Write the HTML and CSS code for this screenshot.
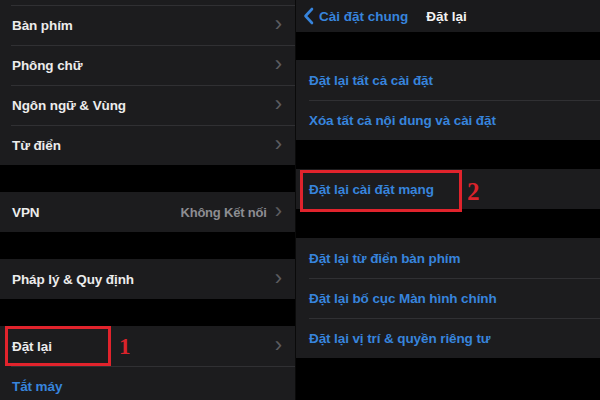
FILE: index.html
```html
<!DOCTYPE html>
<html lang="vi">
<head>
    <meta charset="UTF-8">
    <title>Cài đặt chung - Đặt lại</title>
    <link rel="stylesheet" href="styles.css">
</head>
<body>
    <div class="screens">
        <div class="panel left">
            <div class="group top">
                <div class="row stub"></div>
                <div class="row"><span class="label">Bàn phím</span><span class="chev">›</span></div>
                <div class="row"><span class="label">Phông chữ</span><span class="chev">›</span></div>
                <div class="row"><span class="label">Ngôn ngữ &amp; Vùng</span><span class="chev">›</span></div>
                <div class="row"><span class="label">Từ điển</span><span class="chev">›</span></div>
            </div>
            <div class="group">
                <div class="row"><span class="label">VPN</span><span class="value">Không Kết nối</span><span class="chev">›</span></div>
            </div>
            <div class="group">
                <div class="row"><span class="label">Pháp lý &amp; Quy định</span><span class="chev">›</span></div>
            </div>
            <div class="group">
                <div class="row marked">
                    <span class="label">Đặt lại</span><span class="chev">›</span>
                    <div class="mark mark-1"></div>
                    <div class="step step-1">1</div>
                </div>
                <div class="row"><span class="label link">Tắt máy</span></div>
            </div>
        </div>

        <div class="panel right">
            <div class="navbar">
                <svg class="back" width="11" height="18" viewBox="0 0 11 18"><path d="M9 2 L2.5 9 L9 16" fill="none" stroke="#3784dc" stroke-width="2.6" stroke-linecap="round" stroke-linejoin="round"/></svg>
                <span class="back-text">Cài đặt chung</span>
                <span class="nav-title">Đặt lại</span>
            </div>
            <div class="group g1">
                <div class="row"><span class="label link">Đặt lại tất cả cài đặt</span></div>
                <div class="row"><span class="label link">Xóa tất cả nội dung và cài đặt</span></div>
            </div>
            <div class="group g2">
                <div class="row marked">
                    <span class="label link">Đặt lại cài đặt mạng</span>
                    <div class="mark mark-2"></div>
                    <div class="step step-2">2</div>
                </div>
            </div>
            <div class="group g2">
                <div class="row"><span class="label link">Đặt lại từ điển bàn phím</span></div>
                <div class="row"><span class="label link">Đặt lại bố cục Màn hình chính</span></div>
                <div class="row"><span class="label link">Đặt lại vị trí &amp; quyền riêng tư</span></div>
            </div>
        </div>
    </div>
</body>
</html>
```

FILE: styles.css
```css
body {
    margin: 0;
    background: #000;
    font-family: "Liberation Sans", Arial, sans-serif;
    font-size: 13.5px;
    color: #ececec;
}

.screens {
    display: flex;
    width: 600px;
    height: 400px;
    overflow: hidden;
}

.panel {
    display: flex;
    flex-direction: column;
    gap: 27px;
}

.panel.left {
    width: 296px;
    border-right: 1px solid #0a0a0a;
    box-sizing: border-box;
}

.panel.right {
    flex: 1;
    gap: 0;
}

.group {
    background: #1c1c1e;
}

.row {
    height: 40px;
    display: flex;
    align-items: center;
    padding: 0 13px 0 12px;
    position: relative;
}

.row + .row::before {
    content: "";
    position: absolute;
    top: 0;
    left: 11px;
    right: 0;
    height: 1px;
    background: #303033;
}

.row.stub {
    height: 5px;
}

.label {
    flex: 1;
    white-space: nowrap;
    font-weight: 600;
    letter-spacing: -0.1px;
}

.link {
    color: #3784dc;
}

.value {
    color: #8d8d92;
    margin-right: 8px;
    font-size: 13px;
    font-weight: 600;
    letter-spacing: -0.2px;
}

.chev {
    color: #5c5c60;
    font-size: 22px;
    line-height: 1;
    margin-top: -3px;
}

.navbar {
    height: 32px;
    display: flex;
    align-items: center;
    padding-left: 7px;
    background: #1a1a1c;
    font-weight: 600;
}

.back {
    margin-right: 5px;
}

.back-text {
    color: #3784dc;
    font-size: 13.5px;
}

.nav-title {
    color: #f2f2f2;
    margin-left: 18px;
    font-size: 13.5px;
    font-weight: 700;
}

.right .row {
    padding-left: 13px;
}

.right .row + .row::before {
    left: 13px;
}

.g1 {
    margin-top: 28px;
}

.g2 {
    margin-top: 29px;
}

.mark {
    position: absolute;
    border: 3px solid #e1232c;
    box-sizing: border-box;
}

.mark-1 {
    left: 5px;
    top: 0;
    width: 106px;
    height: 40px;
}

.mark-2 {
    left: 4px;
    top: 1px;
    width: 162px;
    height: 42px;
}

.step {
    position: absolute;
    font-family: "Liberation Serif", "Times New Roman", serif;
    font-weight: 700;
    color: #d9232b;
    line-height: 1;
}

.step-1 {
    left: 119px;
    top: 9px;
    font-size: 23px;
}

.step-2 {
    left: 171px;
    top: 10px;
    font-size: 25px;
}
```
